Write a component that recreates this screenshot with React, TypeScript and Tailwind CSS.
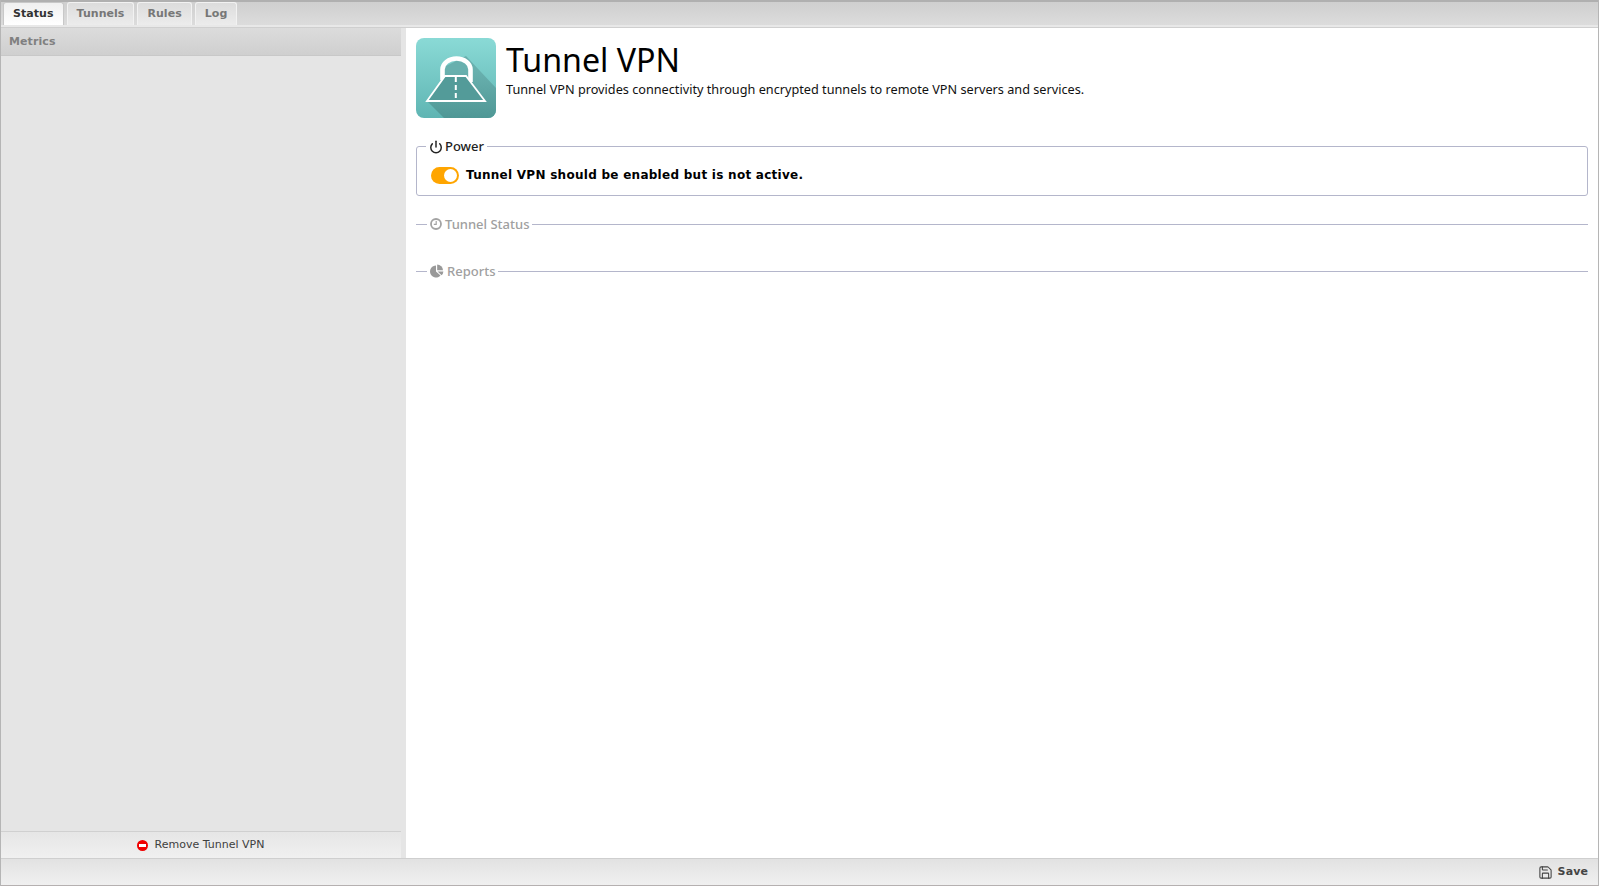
import { Power, Save } from 'lucide-react'

const tabs = ['Status', 'Tunnels', 'Rules', 'Log']

function TunnelIcon() {
  return (
    <svg viewBox="0 0 80 80" className="w-[80px] h-[80px] shrink-0">
      <defs>
        <linearGradient id="bg" x1="0" y1="0" x2="0" y2="1">
          <stop offset="0" stopColor="#8adad6" />
          <stop offset="1" stopColor="#5fb5b3" />
        </linearGradient>
        <linearGradient id="shade" x1="0" y1="0" x2="0" y2="1">
          <stop offset="0.25" stopColor="#68b0ae" />
          <stop offset="1" stopColor="#4e9694" />
        </linearGradient>
        <clipPath id="round">
          <rect width="80" height="80" rx="8" />
        </clipPath>
      </defs>
      <rect width="80" height="80" rx="8" fill="url(#bg)" />
      <g clipPath="url(#round)">
        <path d="M50 18 L82 52 V82 H30 L11 63 L26 42 V30 Z" fill="url(#shade)" />
      </g>
      <path d="M26.5 42 V31.5 A14 11 0 0 1 54.5 31.5 V44" fill="none" stroke="#fff" strokeWidth="4.6" />
      <path d="M11 63 L29 38 H50 L69 63 Z" fill="#539b99" />
      <path d="M11 63 L29 38 H50 L69 63 Z" fill="none" stroke="#fff" strokeWidth="1.8" />
      <path d="M39.8 39 V62" stroke="#fff" strokeWidth="2" strokeDasharray="5 3" />
    </svg>
  )
}

function ClockIcon() {
  return (
    <svg viewBox="0 0 12 12" className="w-3 h-3">
      <circle cx="6" cy="6" r="5" fill="none" stroke="#a3a3a3" strokeWidth="1.8" />
      <path d="M6.2 3 V6.3 H3.8" fill="none" stroke="#a3a3a3" strokeWidth="1.2" />
    </svg>
  )
}

function PieIcon() {
  return (
    <svg viewBox="0 0 14 14" className="w-[14px] h-[14px]">
      <path d="M6 1.5 V7.5 L10.5 11.5 A6 6 0 1 1 6 1.5 Z" fill="#999" />
      <path d="M7.2 0.5 A6 6 0 0 1 13 6.2 H7.2 Z" fill="#999" />
      <path d="M7.6 7.4 H13.4 A6 6 0 0 1 11.6 11.2 Z" fill="#999" />
    </svg>
  )
}

function Section({ icon, title }: { icon: React.ReactNode; title: string }) {
  return (
    <div className="flex items-center h-[14px]">
      <div className="w-[11px] h-px bg-[#b4b6cb]" />
      <div className="flex items-center gap-[3px] px-[3px] text-[13px] font-medium font-['Noto_Sans',sans-serif] text-[#a0a0a0]">
        {icon}
        <span className="pt-[2px]">{title}</span>
      </div>
      <div className="flex-1 h-px bg-[#b4b6cb]" />
    </div>
  )
}

export default function App() {
  return (
    <div className="h-[886px] w-[1599px] flex flex-col overflow-hidden bg-white border-x border-[#b5b5b5] font-['DejaVu_Sans',sans-serif]">
      <div className="h-[25px] shrink-0 flex items-end gap-[3px] pl-[2px] border-t-2 border-[#b0b0b0] bg-gradient-to-b from-[#cfcfcf] to-[#dcdcdc]">
        {tabs.map((tab, index) => (
          <div
            key={tab}
            className={`h-[23px] flex items-center px-[9px] rounded-t-[3px] border border-b-0 text-[11px] font-bold tracking-[0.05px] ${
              index === 0
                ? 'border-[#c8c8c8] bg-gradient-to-b from-[#f0f0f0] to-white text-[#333]'
                : 'border-[#f2f2f2] bg-gradient-to-b from-[#dcdcdc] to-[#ececec] text-[#777]'
            }`}
          >
            {tab}
          </div>
        ))}
      </div>
      <div className="h-[3px] shrink-0 bg-[#e8e8e8] border-b border-[#cfcfcf]" />

      <div className="flex-1 min-h-0 flex">
        <div className="w-[405px] shrink-0 flex flex-col bg-[#e5e5e5] pr-[5px]">
          <div className="h-[28px] shrink-0 flex items-center pl-[8px] pt-[2px] text-[11px] font-bold tracking-[0.1px] text-[#808080] bg-gradient-to-b from-[#dcdcdc] to-[#cfcfcf] border-b border-[#c8c8c8]">
            Metrics
          </div>
          <div className="flex-1" />
          <div className="h-[27px] shrink-0 flex items-center justify-center gap-[7px] pr-[1px] text-[11px] text-[#404040] bg-gradient-to-b from-[#e6e6e6] to-[#f0f0f0] border-t border-[#d0d0d0]">
            <span className="w-[11px] h-[11px] rounded-full bg-[#f00000] flex items-center justify-center">
              <span className="w-[7px] h-[3px] bg-white" />
            </span>
            <span>Remove Tunnel VPN</span>
          </div>
        </div>

        <div className="flex-1 min-w-0 pt-[10px] pl-[10px] pr-[10px]">
          <div className="flex gap-[10px] h-[80px]">
            <TunnelIcon />
            <div className="font-['Noto_Sans',sans-serif] text-black">
              <div className="text-[32.2px] leading-[44px]">Tunnel VPN</div>
              <div className="text-[12.7px] leading-[16px] -mt-[1px] text-[#111]">
                Tunnel VPN provides connectivity through encrypted tunnels to remote VPN servers and services.
              </div>
            </div>
          </div>

          <div className="relative mt-[28px] h-[50px] rounded-[3px] border border-[#b4b6cb] flex items-center pl-[14px] pt-[8px] gap-[7px]">
            <div className="absolute -top-[10px] left-[9px] bg-white px-[3px] flex items-center gap-[2px] text-[13px] font-medium font-['Noto_Sans',sans-serif] text-[#222]">
              <Power size={14} strokeWidth={2.5} />
              <span>Power</span>
            </div>
            <div className="w-[28px] h-[17px] rounded-full bg-[#ffa500] flex items-center justify-end pr-[2px] mt-[1px]">
              <div className="w-[13px] h-[13px] rounded-full bg-white" />
            </div>
            <span className="text-[12px] font-bold tracking-[0.27px] text-black">Tunnel VPN should be enabled but is not active.</span>
          </div>

          <div className="mt-[21px]">
            <Section icon={<ClockIcon />} title="Tunnel Status" />
          </div>
          <div className="mt-[33px]">
            <Section icon={<PieIcon />} title="Reports" />
          </div>
        </div>
      </div>

      <div className="h-[28px] shrink-0 flex items-center justify-end pr-[10px] gap-[5px] bg-gradient-to-b from-[#e2e2e2] to-[#f0f0f0] border-t border-[#cfcfcf] border-b border-b-[#b5b0b0] text-[11px] font-bold tracking-[0.1px] text-[#444]">
        <Save size={15} strokeWidth={1.7} />
        <span>Save</span>
      </div>
    </div>
  )
}
